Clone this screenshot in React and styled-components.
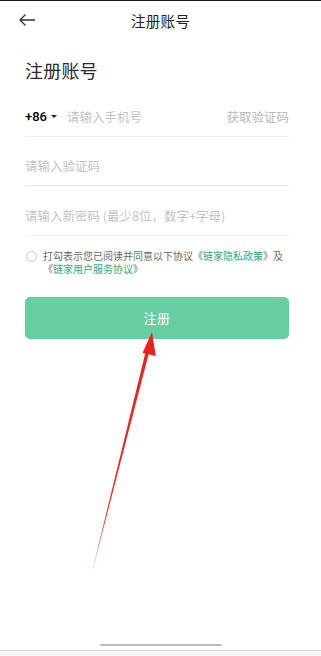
import React from "react";
import styled, { createGlobalStyle } from "styled-components";

const Global = createGlobalStyle`
  html, body { margin: 0; padding: 0; background: #fff; }
  body { font-family: "Noto Sans CJK SC", "Noto Sans", sans-serif; }
  * { box-sizing: border-box; }
`;

const Page = styled.div`
  position: relative;
  height: 656px;
  display: flex;
  flex-direction: column;
  border-top: 1.5px solid #1a1a1a;
  overflow: hidden;
`;

const Header = styled.div`
  height: 39px;
  display: flex;
  align-items: center;
  justify-content: center;
  position: relative;
`;

const Back = styled.div`
  position: absolute;
  left: 18px;
  top: 12px;
  width: 18px;
  height: 14px;
  display: flex;
`;

const Title = styled.div`
  font-size: 14.5px;
  color: #222;
  letter-spacing: 0.2px;
`;

const Content = styled.div`
  padding: 0 32px 0 25px;
`;

const Heading = styled.h1`
  margin: 18px 0 0;
  font-size: 18px;
  font-weight: 400;
  line-height: 24px;
  color: #2a2a2a;
  letter-spacing: 0.2px;
`;

const Field = styled.div`
  height: 49.5px;
  display: flex;
  align-items: flex-end;
  padding-bottom: 12px;
  border-bottom: 1px solid ${(p) => (p.$light ? "#f1f1f1" : "#e8e8e8")};
  font-size: 12.5px;
  line-height: 14px;
  margin-top: ${(p) => p.$top || 0}px;
`;

const Code = styled.span`
  color: #000;
  font-family: "Roboto", "Noto Sans", sans-serif;
  font-size: 13px;
  font-weight: 500;
  display: flex;
  align-items: center;
  margin-right: 10px;
`;

const Caret = styled.span`
  margin-left: 4px;
  width: 0;
  height: 0;
  border-left: 3px solid transparent;
  border-right: 3px solid transparent;
  border-top: 3.5px solid #222;
`;

const Placeholder = styled.span`
  color: #c3c3c3;
  flex: 1;
  white-space: nowrap;
`;

const SendCode = styled.span`
  color: #b9b9b9;
`;

const Agree = styled.div`
  margin-top: 13px;
  display: flex;
  align-items: flex-start;
`;

const Radio = styled.span`
  flex: none;
  width: 11px;
  height: 11px;
  border: 1px solid #c8c8c8;
  border-radius: 50%;
  margin: 2px 6px 0 1px;
`;

const AgreeText = styled.p`
  margin: 0;
  font-size: 10px;
  line-height: 13.5px;
  color: #6a6a6a;
  white-space: nowrap;
`;

const Link = styled.span`
  color: #33a577;
`;

const Button = styled.button`
  margin-top: 21px;
  width: 100%;
  height: 42px;
  border: none;
  border-radius: 5px;
  background: #66cea2;
  color: #fff;
  font-family: inherit;
  font-size: 13px;
  letter-spacing: 0.5px;
`;

const Overlay = styled.svg`
  position: absolute;
  left: 0;
  top: 0;
  pointer-events: none;
`;

const Footer = styled.div`
  margin-top: auto;
  display: flex;
  flex-direction: column;
  align-items: center;
`;

const Indicator = styled.div`
  width: 122px;
  height: 2px;
  background: #bdbdbd;
  border-radius: 1px;
  margin-bottom: 4px;
`;

const Bar = styled.div`
  width: 100%;
  height: 6px;
  border-top: 1px solid #dcdcdc;
  background: #f6f6f6;
`;

export default function App() {
  return (
    <>
      <Global />
      <Page>
        <Header>
          <Back>
            <svg width="18" height="14" viewBox="0 0 18 14">
              <path d="M17 7H2M7.5 1.5L2 7l5.5 5.5" fill="none" stroke="#333" strokeWidth="1.3" />
            </svg>
          </Back>
          <Title>注册账号</Title>
        </Header>
        <Content>
          <Heading>注册账号</Heading>
          <Field $light $top={5}>
            <Code>
              +86<Caret />
            </Code>
            <Placeholder>请输入手机号</Placeholder>
            <SendCode>获取验证码</SendCode>
          </Field>
          <Field>
            <Placeholder>请输入验证码</Placeholder>
          </Field>
          <Field $light>
            <Placeholder>请输入新密码 (最少8位，数字+字母)</Placeholder>
          </Field>
          <Agree>
            <Radio />
            <div>
              <AgreeText>
                打勾表示您已阅读并同意以下协议《<Link>链家隐私政策</Link>》及
              </AgreeText>
              <AgreeText>
                《<Link>链家用户服务协议</Link>》
              </AgreeText>
            </div>
          </Agree>
          <Button>注册</Button>
        </Content>
        <Footer>
          <Indicator />
          <Bar />
        </Footer>
        <Overlay width="321" height="656" viewBox="0 0 321 656">
          <polygon
            points="92,571 148.6,353.2 155.8,355 152,331 142.6,351.8 145.2,352.4"
            fill="#f0211b"
          />
        </Overlay>
      </Page>
    </>
  );
}
